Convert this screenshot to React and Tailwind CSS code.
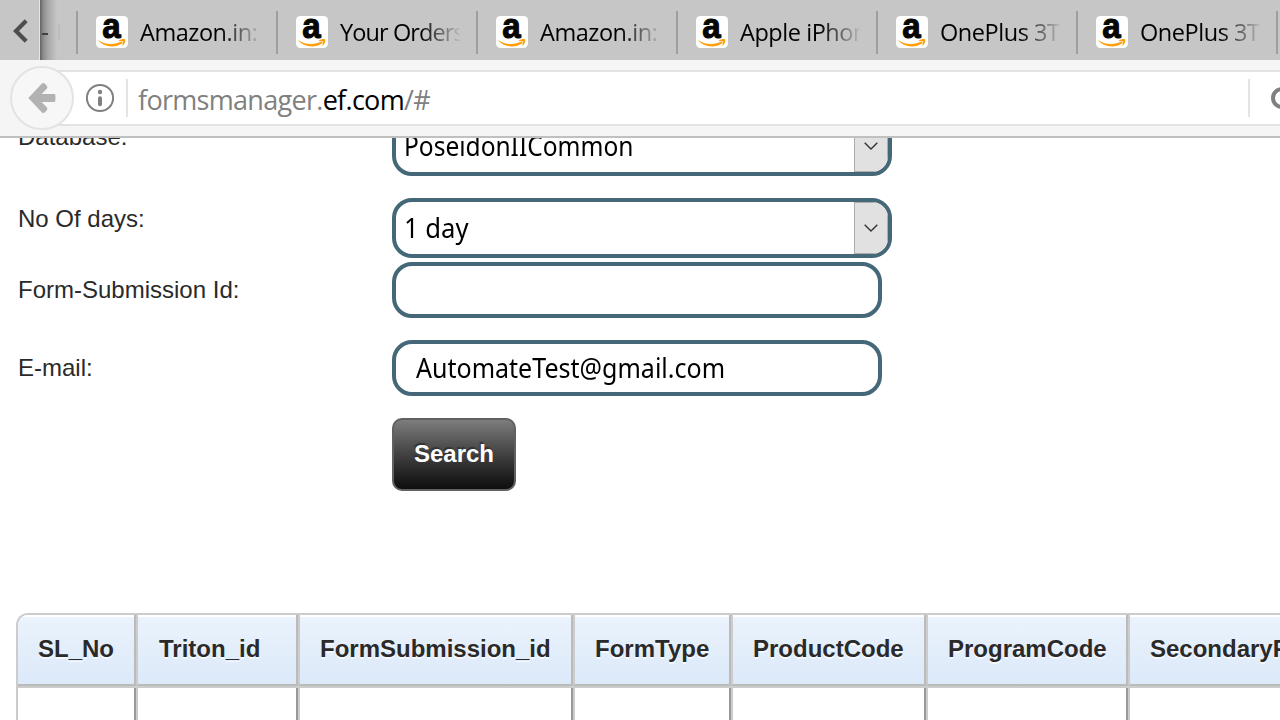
import React from "react";

const tabs = [
  { title: "Amazon.in:", cls: "tracking-[-0.45px]" },
  { title: "Your Orders", cls: "tracking-[-0.9px]" },
  { title: "Amazon.in:", cls: "tracking-[-0.45px]" },
  { title: "Apple iPhon", cls: "tracking-[-0.45px]" },
  { title: "OnePlus 3T", cls: "tracking-[-0.45px]" },
  { title: "OnePlus 3T", cls: "tracking-[-0.45px]" },
];

const columns = [
  { name: "SL_No", cls: "w-[120px] pl-5" },
  { name: "Triton_id", cls: "w-[162px] pl-[21px]" },
  { name: "FormSubmission_id", cls: "w-[275px] pl-5" },
  { name: "FormType", cls: "w-[158px] pl-5" },
  { name: "ProductCode", cls: "w-[195px] pl-5" },
  { name: "ProgramCode", cls: "w-[202px] pl-5" },
  { name: "SecondaryProgram", cls: "w-[290px] pl-5" },
];

function AmazonIcon() {
  return (
    <svg className="block size-8 shrink-0 overflow-visible" viewBox="0 0 32 32">
      <rect width="32" height="32" rx="4.5" fill="#fff" />
      <text
        x="6.3"
        y="22.4"
        fontSize="35"
        fontWeight="700"
        fontFamily="'Liberation Sans', sans-serif"
        textLength="18.4"
        lengthAdjust="spacingAndGlyphs"
        fill="#050707"
        stroke="#050707"
        strokeWidth="1.1"
      >
        a
      </text>
      <path d="M2.6 24.2 C9 28.7 18 29.4 25.6 25.6 C26.6 25.2 27.3 26.2 26.4 26.9 C20 32.1 8.5 31.7 2.4 24.8 Z" fill="#ffa00a" />
      <path d="M22.6 24.7 C24.5 22.8 28.4 22.7 29.2 23.4 C29.7 24.7 28.7 28 26.9 29.4 C26.4 29.6 26.1 29.2 26.3 28.7 C27 27 27.4 25.8 27 25.4 C26.5 24.9 24.6 25.1 23.1 25.4 Z" fill="#ffa00a" />
    </svg>
  );
}

function TabBar() {
  return (
    <div className="flex h-[60px] w-[1280px] shrink-0 overflow-hidden bg-[#c6c6c6]">
      <div className="flex h-full w-10 shrink-0 items-center border-r border-[#e6e6e6] pl-[13px]">
        <svg className="mt-[2px] block" width="16" height="24" viewBox="0 0 16 24">
          <path d="M13.2 1.7 L3 12 L13.2 22.3" fill="none" stroke="#4d4d4d" strokeWidth="4.2" />
        </svg>
      </div>
      <div className="flex h-full w-9 shrink-0 items-center bg-[linear-gradient(90deg,#626262_0px,#8a8a8a_3px,#a8a8a8_8px,#c6c6c6_17px)]">
        <div className="mt-2 ml-[2px] h-[2px] w-[6px] bg-[#3f3f3f]" />
        <div className="mt-1 ml-[10px] h-4 w-[2px] bg-[#bcbcbc]" />
      </div>
      {tabs.map((tab, i) => (
        <div key={i} className="flex h-full w-[200px] shrink-0 items-center">
          <div className="mt-1 h-[43px] w-[2px] shrink-0 bg-[#9e9e9e]" />
          <div className="ml-[18px] mt-1 shrink-0">
            <AmazonIcon />
          </div>
          <div
            className={
              "ml-3 mt-[3px] w-[120px] overflow-hidden whitespace-nowrap font-['Open_Sans',sans-serif] text-[23.5px] leading-8 text-black [mask-image:linear-gradient(90deg,black_80px,transparent_122px)] " +
              tab.cls
            }
          >
            {tab.title}
          </div>
        </div>
      ))}
      <div className="mt-[11px] h-[43px] w-[2px] shrink-0 bg-[#9e9e9e]" />
    </div>
  );
}

function Toolbar() {
  return (
    <div className="flex h-[78px] w-[1280px] shrink-0 items-start overflow-hidden border-b-2 border-[#c0c0c0] bg-[#f5f5f5] pt-[6px] pl-[10px]">
      <div className="relative z-10 flex size-16 shrink-0 items-center justify-center rounded-full border-2 border-[#e3e3e3] bg-[#f7f7f7]">
        <svg width="30" height="32" viewBox="0 0 30 32">
          <path
            d="M1.3 16 L15 1.6 Q16.5 0.4 18.2 2 L20 4 Q21 5.4 19.8 6.8 L14.6 12 H27 Q28.4 12 28.4 13.4 V18.6 Q28.4 20 27 20 H14.6 L19.8 25.2 Q21 26.6 20 28 L18.2 30 Q16.5 31.6 15 30.4 Z"
            fill="#b2b2b2"
          />
        </svg>
      </div>
      <div className="-ml-8 mt-1 flex h-14 w-[1260px] shrink-0 items-center border-y-2 border-[#e3e3e3] bg-white pl-[43px]">
        <svg className="shrink-0" width="30" height="30" viewBox="0 0 30 30">
          <circle cx="15" cy="15" r="13.1" fill="none" stroke="#808080" strokeWidth="2" />
          <circle cx="15" cy="9" r="2.2" fill="#808080" />
          <path d="M15 15.2 V21.2" stroke="#808080" strokeWidth="4" strokeLinecap="round" />
        </svg>
        <div className="ml-[11px] h-[38px] w-[2px] shrink-0 bg-[#e3e3e3]" />
        <div className="ml-[10px] mt-[3px] w-[1110px] shrink-0 whitespace-nowrap font-['Open_Sans',sans-serif] text-[27px] leading-9 tracking-[-0.7px] text-[#808080]">
          formsmanager.<span className="text-black">ef.com</span>/#
        </div>
        <div className="h-[38px] w-[2px] shrink-0 bg-[#e3e3e3]" />
        <svg className="ml-[20px] shrink-0" width="24" height="24" viewBox="0 0 24 24">
          <circle cx="12" cy="12" r="9" fill="none" stroke="#808080" strokeWidth="4" />
        </svg>
      </div>
    </div>
  );
}

function Label({ children }) {
  return <div className="w-[374px] shrink-0 text-2xl leading-7 text-[#2a2a2a]">{children}</div>;
}

function Select({ value, stretch }) {
  return (
    <div className="flex h-[60px] w-[500px] overflow-hidden rounded-[20px] border-4 border-[#456879] bg-white">
      <div className="w-[458px] shrink-0 pl-2 pt-2 font-['Noto_Sans',sans-serif] text-[27px] leading-9 text-black">
        <span className={"inline-block origin-left " + stretch}>{value}</span>
      </div>
      <div className="flex w-[34px] items-center justify-center border border-[#adadad] bg-[#e1e1e1]">
        <svg width="14" height="8" viewBox="0 0 14 8">
          <path d="M0.7 0.8 L7 7 L13.3 0.8" fill="none" stroke="#333" strokeWidth="1.4" />
        </svg>
      </div>
    </div>
  );
}

function Input({ value }) {
  return (
    <div className="flex h-14 w-[490px] items-center rounded-[20px] border-4 border-[#456879] bg-white pl-5 font-['Noto_Sans',sans-serif] text-[27px] leading-9 text-black">
      <span className="inline-block origin-left scale-x-[0.927]">{value}</span>
    </div>
  );
}

export default function App() {
  return (
    <div className="flex h-[720px] w-[1280px] flex-col overflow-hidden bg-white font-['Liberation_Sans',sans-serif]">
      <TabBar />
      <Toolbar />
      <div className="min-h-0 flex-1 overflow-hidden">
        <div className="-mt-[22px] flex items-start pl-[18px]">
          <div className="mt-[7px]"><Label>Database:</Label></div>
          <Select value="PoseidonIICommon" stretch="scale-x-[0.908]" />
        </div>
        <div className="mt-[22px] flex items-start pl-[18px]">
          <div className="mt-[7px]"><Label>No Of days:</Label></div>
          <Select value="1 day" stretch="scale-x-[0.95]" />
        </div>
        <div className="mt-1 flex items-center pl-[18px]">
          <Label>Form-Submission Id:</Label>
          <Input value="" />
        </div>
        <div className="mt-[22px] flex items-center pl-[18px]">
          <Label>E-mail:</Label>
          <Input value="AutomateTest@gmail.com" />
        </div>
        <button className="mt-[22px] ml-[392px] flex h-[73px] w-[124px] items-center justify-center rounded-[10px] border-2 border-[#616161] bg-linear-to-b from-[#7d7d7d] to-[#0e0e0e] pb-[2px] text-2xl font-bold text-white [text-shadow:-1px_-2px_1px_#333]">
          Search
        </button>
        <div className="mt-[122px] ml-4 w-[1404px] overflow-hidden rounded-tl-[12px] border-t-2 border-l-2 border-[#cccccc]">
          <div className="flex h-[73px] border-b-2 border-[#cccccc]">
            {columns.map((c, i) => (
              <div
                key={c.name}
                className={
                  "flex shrink-0 flex-col border-r-2 border-b-2 border-b-[#bbbbbb] border-r-[#bbbbbb] bg-linear-to-b from-[#ebf3fc] to-[#dce9f9] pt-[19px] text-2xl leading-[30px] font-bold text-[#2a2a2a] shadow-[inset_0_2px_0_#fff] [text-shadow:0_2px_0_#f4f8fe] " +
                  (i === 0 ? "w-[118px] pl-5" : c.cls + " border-l-2 border-l-[#cccccc]")
                }
              >
                {c.name}
              </div>
            ))}
          </div>
          <div className="flex h-16">
            {columns.map((c, i) => (
              <div
                key={c.name}
                className={
                  "shrink-0 border-r-2 border-r-[#999999] bg-white " +
                  (i === 0 ? "w-[118px]" : c.cls + " border-l-2 border-l-[#cccccc]")
                }
              />
            ))}
          </div>
        </div>
      </div>
    </div>
  );
}
